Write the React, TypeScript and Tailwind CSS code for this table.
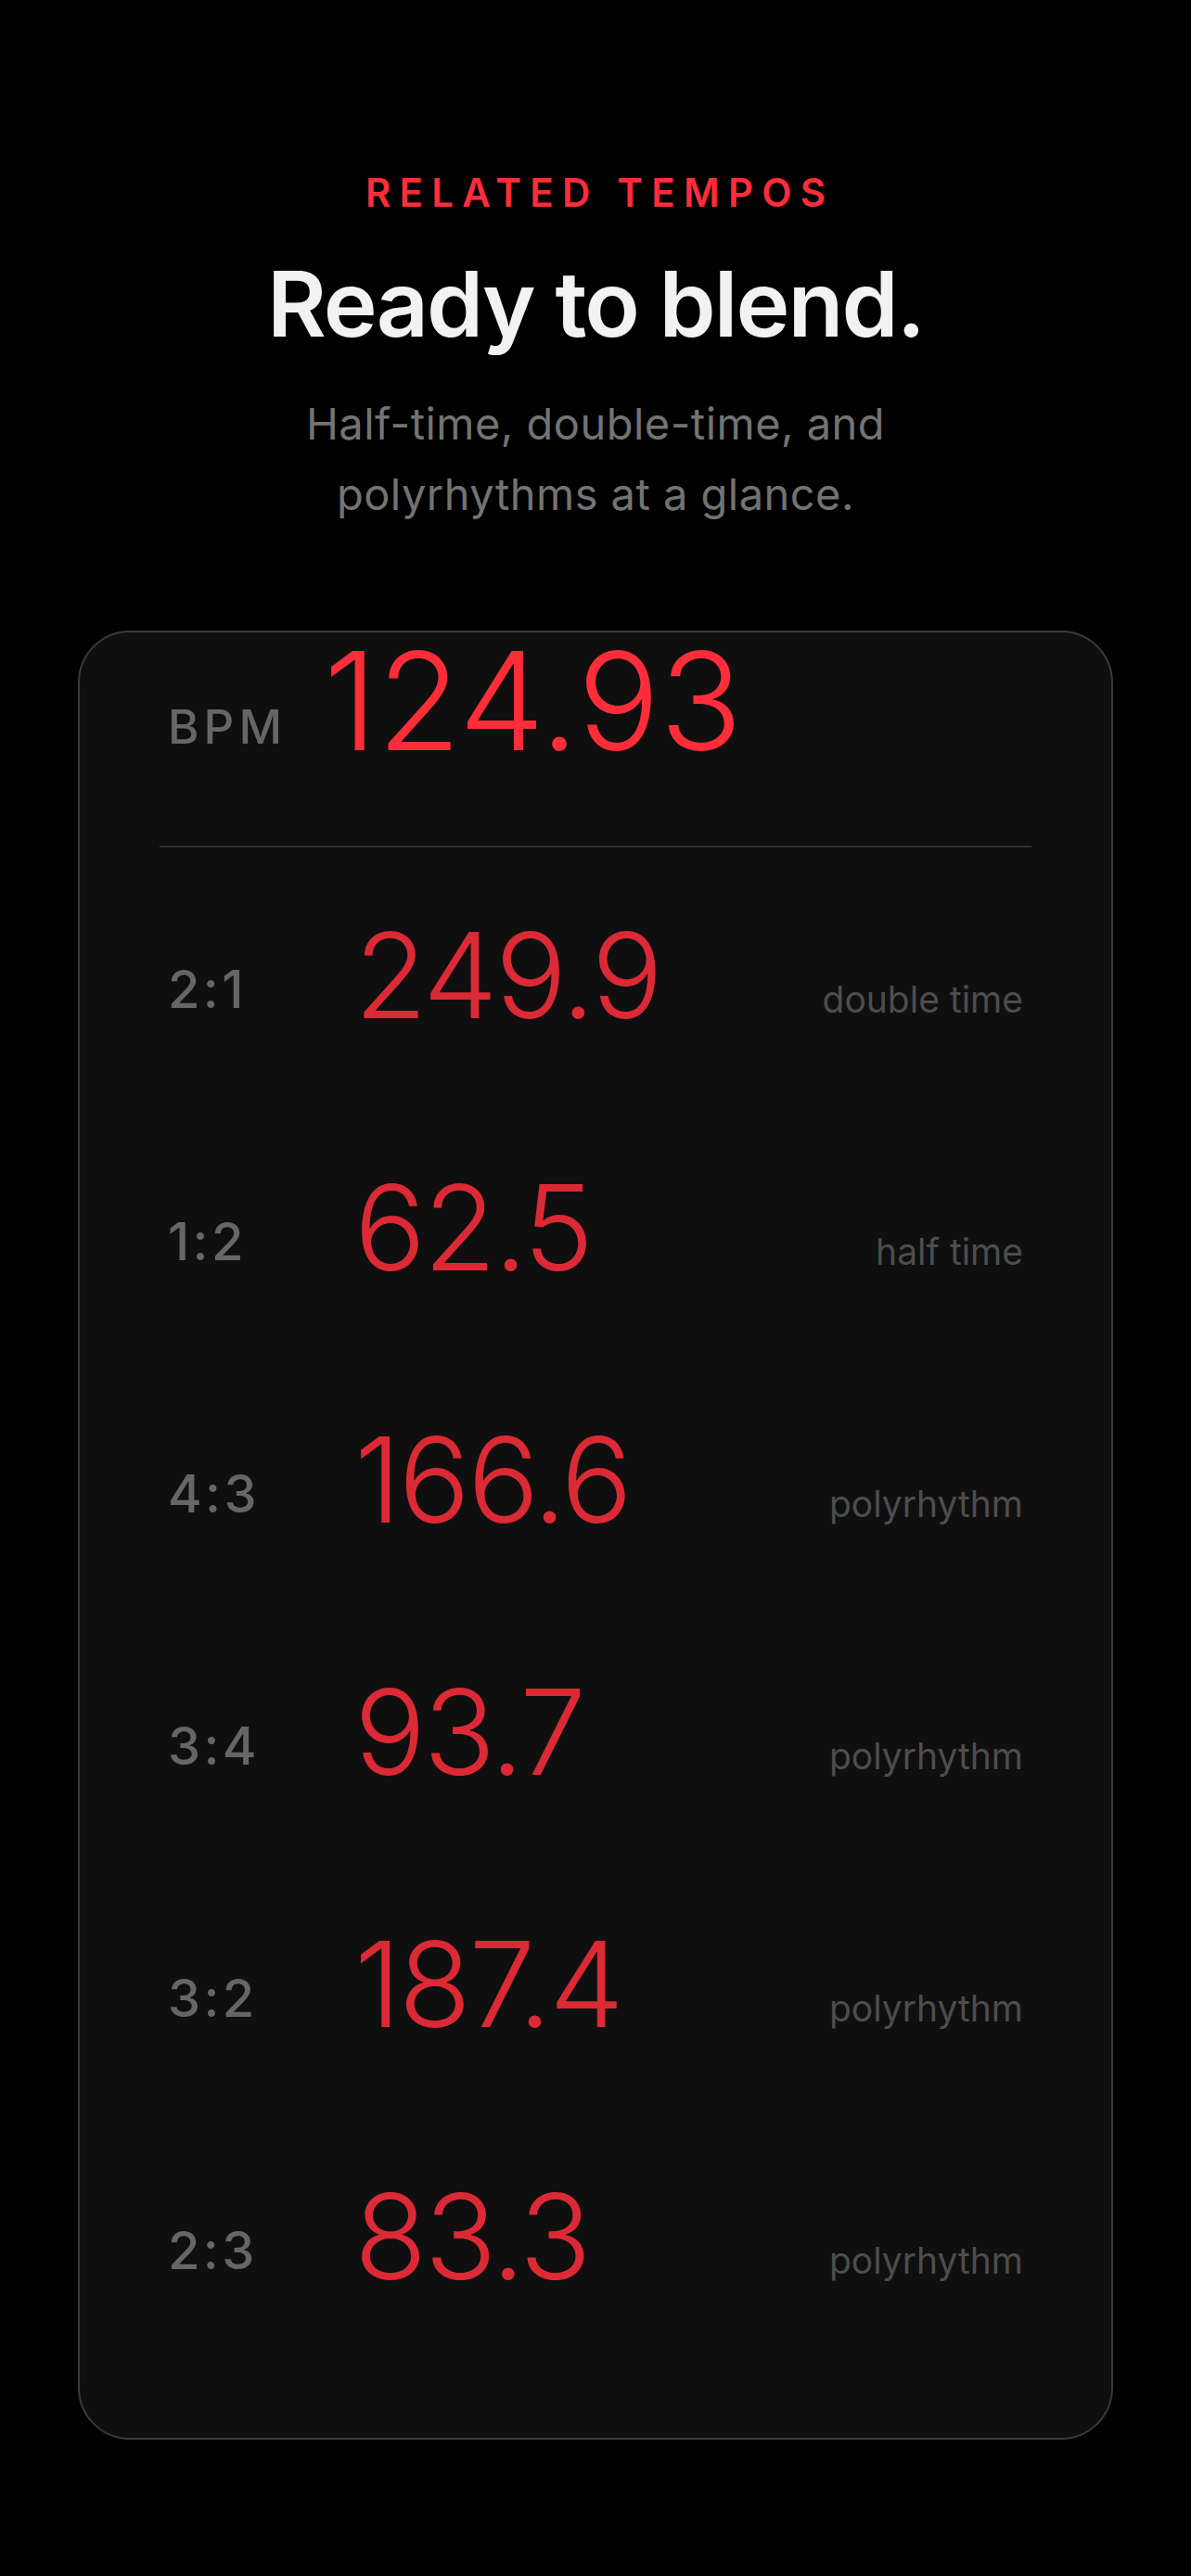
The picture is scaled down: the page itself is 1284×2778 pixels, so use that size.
const rows = [
  { ratio: "2:1", value: "249.9", note: "double time" },
  { ratio: "1:2", value: "62.5", note: "half time" },
  { ratio: "4:3", value: "166.6", note: "polyrhythm" },
  { ratio: "3:4", value: "93.7", note: "polyrhythm" },
  { ratio: "3:2", value: "187.4", note: "polyrhythm" },
  { ratio: "2:3", value: "83.3", note: "polyrhythm" },
];

export default function App() {
  return (
    <main className="min-h-[2778px] w-full bg-black pt-[187px] font-[Inter,sans-serif]">
      {/* Header */}
      <div className="flex flex-col items-center text-center">
        <p className="pl-[0.22em] text-[42px] font-semibold leading-none tracking-[0.22em] text-[#ff2d3a]">
          RELATED TEMPOS
        </p>
        <h1 className="mt-[50px] text-[98px] font-semibold leading-none tracking-[-0.02em] text-[#f2f2f2]">
          Ready to blend.
        </h1>
        <p className="mt-[42px] text-[47px] leading-[76px] tracking-[0.01em] text-[#737373]">
          Half-time, double-time, and
          <br />
          polyrhythms at a glance.
        </p>
      </div>

      {/* Card */}
      <section className="mx-[84px] mt-[109px] rounded-[56px] border-2 border-[#3a3a3a] bg-[#0f0f0f] px-[86px] pb-[81px]">
        <div className="flex items-end px-[9px]">
          <span className="w-[168px] shrink-0 pb-[20px] text-[51px] font-medium leading-none tracking-[0.1em] text-[#666666]">
            BPM
          </span>
          <span className="text-[147px] font-light leading-none text-[#ff2d3a]">
            124.93
          </span>
        </div>

        <div className="mt-[83px] h-[2px] bg-[#2e2e2e]" />

        <div className="pt-[2px]">
          {rows.map((row) => (
            <div key={row.ratio} className="flex items-end px-[9px] py-[72px]">
              <span className="w-[201px] shrink-0 pb-[21px] text-[56px] font-medium leading-none tracking-[0.06em] text-[#666666]">
                {row.ratio}
              </span>
              <span className="flex-1 text-[128px] font-light leading-none tracking-[-0.02em] text-[#db2a35]">
                {row.value}
              </span>
              <span className="pb-[19px] text-[39px] leading-none text-[#4d4d4d]">
                {row.note}
              </span>
            </div>
          ))}
        </div>
      </section>
    </main>
  );
}
